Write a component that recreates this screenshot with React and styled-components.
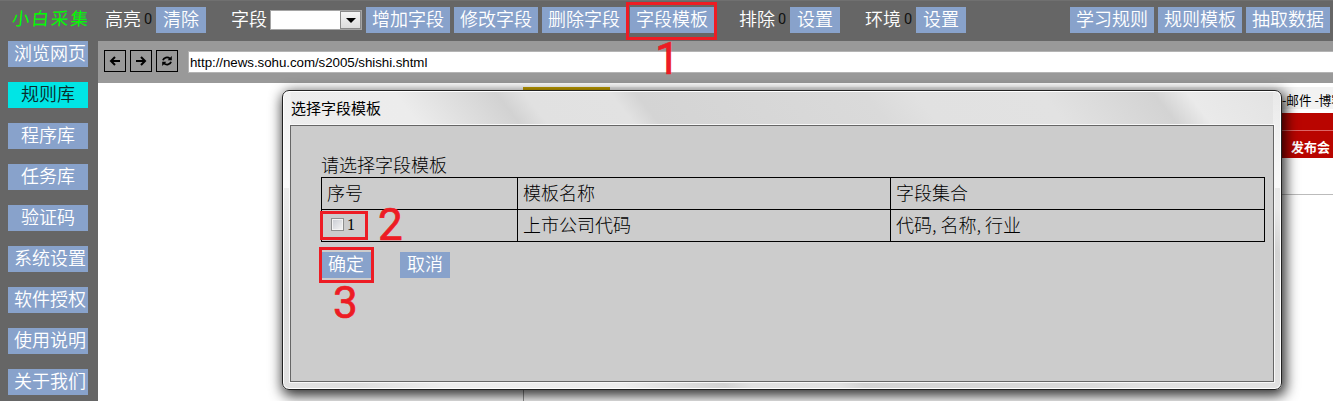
import React from 'react';
import styled, { createGlobalStyle, css } from 'styled-components';

const Global = createGlobalStyle`
  * { box-sizing: border-box; }
  body { margin: 0; overflow: hidden; background: #fff; }
`;

const cjk = '"Noto Sans CJK SC", sans-serif';

const Shell = styled.div`
  position: relative;
  width: 1333px;
  height: 401px;
  overflow: hidden;
  display: flex;
  flex-direction: column;
  font: 300 18px/26px ${cjk};
  color: #000;
`;
const TopBar = styled.header`
  flex: none;
  height: 41px;
  padding: 6px 3px 0 12px;
  background: #666;
  border-top: 1px solid #707070;
  display: flex;
  align-items: flex-start;
  white-space: nowrap;
`;
const Logo = styled.div`
  width: 93px;
  font-size: 17.5px;
  font-weight: 400;
  line-height: 22px;
  letter-spacing: 2px;
  color: #0f0;
  span { display: inline-block; transform: skewX(-5deg); }
`;
const Group = styled.div`
  display: flex;
  align-items: flex-start;
  margin-left: ${(p) => (p.$end ? 'auto' : `${p.$gap || 0}px`)};
`;
const Label = styled.span`
  color: #fff;
  font-weight: 350;
  line-height: 22px;
  width: 39px;
`;
const Count = styled.span`
  width: 12px;
  font: 14.5px/25px Roboto, sans-serif;
  color: #111;
`;
const Button = styled.button`
  flex: none;
  height: 26px;
  padding: 0 6px 4px;
  border: 0;
  background: #88a2cb;
  color: #fff;
  font: 350 18px/22px ${cjk};
  white-space: nowrap;
  text-align: center;
  ${(p) => p.$pad && css`width: 50px; padding: 0 7px 4px;`}
`;
const Buttons = styled.div`
  display: flex;
  gap: 4px;
`;
const Select = styled.div`
  width: 92px;
  height: 20px;
  margin: 3px 4px 0 0;
  display: flex;
  justify-content: flex-end;
  background: #fff;
  border: 1px solid #a5a5a5;
`;
const Arrow = styled.div`
  width: 21px;
  height: 18px;
  display: flex;
  align-items: center;
  justify-content: center;
  border: 1px solid #8a8a8a;
  background: linear-gradient(#f4f4f4, #dcdcdc);
`;
const Body = styled.div`
  flex: 1;
  display: flex;
  min-height: 0;
`;
const Sidebar = styled.nav`
  flex: none;
  width: 98px;
  padding: 0 10px 0 8px;
  background: #666;
  display: flex;
  flex-direction: column;
  gap: 15px;
`;
const NavItem = styled.div`
  flex: none;
  height: 26px;
  padding: 0 0 0 6px;
  padding-right: ${(p) => (p.$wide ? 0 : 6)}px;
  text-align: ${(p) => (p.$wide ? 'left' : 'center')};
  background: ${(p) => (p.$active ? '#00e5e5' : '#88a2cb')};
  color: ${(p) => (p.$active ? '#0a2c2c' : '#fff')};
  font-weight: 350;
  line-height: 23px;
  white-space: nowrap;
`;
const Main = styled.main`
  flex: 1;
  min-width: 0;
`;
const AddressBar = styled.div`
  height: 42px;
  padding: 9px 0 0 6px;
  display: flex;
  gap: 4px;
  background: #999;
`;
const NavButton = styled.div`
  width: 22px;
  height: 22px;
  display: flex;
  align-items: center;
  justify-content: center;
  border: 1px solid #000;
`;
const Url = styled.div`
  flex: 1;
  height: 22px;
  margin: 1px 0 0 6px;
  padding-left: 1px;
  background: #fff;
  border: 1px solid #b4b4b4;
  border-right: 0;
  font: 13.33px/21px "Liberation Sans", sans-serif;
  letter-spacing: -0.05px;
`;
const WebPage = styled.div`
  padding-top: 4px;
  display: flex;
  flex-direction: column;
`;
const SiteLinks = styled.div`
  height: 22px;
  margin-left: 425px;
  display: flex;
  justify-content: space-between;
  background: linear-gradient(#c8a400, #c8a400) 0 0 / 87px 22px no-repeat, #f2f2f2;
`;
const Links = styled.span`
  width: 51px;
  margin-left: auto;
  white-space: nowrap;
  font: 400 12.6px/25px ${cjk};
`;
const RedBar = styled.div`
  height: ${(p) => p.$h}px;
  margin-top: ${(p) => p.$top}px;
  padding-right: 3px;
  margin-left: 425px;
  background: #b90500;
  border-top: ${(p) => (p.$line ? '1px solid #d66' : '0')};
  color: #fff;
  font: 700 13px/31px ${cjk};
  text-align: right;
`;
const Column = styled.div`
  height: 210px;
  margin: 36px 0 0 425px;
  border-top: 1px solid #bbb;
  border-left: 1px solid #999;
`;
const Dialog = styled.section`
  position: absolute;
  left: 282px;
  top: 90px;
  width: 1000px;
  height: 300px;
  padding: 2px 7px 7px;
  border: 1px solid #222;
  border-radius: 7px;
  background:
    linear-gradient(rgba(255,255,255,.2), rgba(255,255,255,.75)) 0 0 / 8px 97px no-repeat,
    linear-gradient(rgba(255,255,255,.2), rgba(255,255,255,.75)) 100% 0 / 8px 97px no-repeat,
    linear-gradient(52deg, #e2e2e2 0, #dedede 60px, #ededed 130px, #ececec 270px, #d2d2d2 350px, #e1e1e1 372px, #e2e2e2 440px, #d4d4d4 460px, #dadada 640px, #e1e1e1 680px, #e2e2e2 780px, #d3d3d3 868px, #eaeaea 895px, #e2e2e2 973px);
  box-shadow: inset 0 0 0 1px #fff, 2px 4px 13px 2px rgba(0,0,0,.8);
`;
const Title = styled.h1`
  margin: 0;
  padding-left: 1px;
  height: 32px;
  font: 400 15px/30px ${cjk};
`;
const Panel = styled.div`
  height: 257px;
  padding: 28px 8px 0 30px;
  border: 1px solid #666;
  outline: 1px solid #f8f8f8;
  background: #ccc;
`;
const Prompt = styled.div`
  height: 23px;
  line-height: 21px;
`;
const Table = styled.table`
  width: 944px;
  border-collapse: collapse;
  table-layout: fixed;
`;
const Cell = styled.td`
  width: ${(p) => p.$w}px;
  height: 32px;
  padding: 0 5px 4px;
  border: 1px solid #000;
  line-height: 26px;
`;
const Choice = styled.label`
  display: flex;
  align-items: center;
  padding: 2px 0 0 4px;
  gap: 3px;
  font: 16px/25px "Liberation Serif", serif;
`;
const Box = styled.span`
  width: 13px;
  height: 13px;
  border: 1px solid #8e8f8f;
  background: linear-gradient(135deg, #c8cbd2, #f6f6f6);
  box-shadow: inset 0 0 0 1px #f4f4f4;
`;
const Actions = styled.div`
  display: flex;
  gap: 29px;
  margin-top: 10px;
`;
const Mark = styled.div`
  position: absolute;
  left: ${(p) => p.$x}px;
  top: ${(p) => p.$y}px;
  width: ${(p) => p.$w}px;
  height: ${(p) => p.$h}px;
  border: 3px solid #ed1c24;
`;
const Step = styled.div`
  position: absolute;
  left: ${(p) => p.$x}px;
  top: ${(p) => p.$y}px;
  color: #ed1c24;
  -webkit-text-stroke: 0.7px #ed1c24;
  font: 44px/45px Roboto, sans-serif;
`;

const Icon = ({ children }) => (
  <svg width="12" height="12" viewBox="0 0 12 12" fill="none" stroke="#000" strokeWidth="2">{children}</svg>
);

const nav = ['浏览网页', '规则库', '程序库', '任务库', '验证码', '系统设置', '软件授权', '使用说明', '关于我们'];

export default function App() {
  return (
    <Shell>
      <Global />
      <TopBar>
        <Logo><span>小白采集</span></Logo>
        <Group><Label>高亮</Label><Count>0</Count><Button $pad>清除</Button></Group>
        <Group $gap={25}>
          <Label>字段</Label>
          <Select><Arrow><svg width="10" height="5" viewBox="0 0 10 5"><path d="M0 0h10L5 5z" /></svg></Arrow></Select>
          <Buttons>
            {['增加字段', '修改字段', '删除字段', '字段模板'].map((t) => <Button key={t}>{t}</Button>)}
          </Buttons>
        </Group>
        <Group $gap={25}><Label>排除</Label><Count>0</Count><Button $pad>设置</Button></Group>
        <Group $gap={25}><Label>环境</Label><Count>0</Count><Button $pad>设置</Button></Group>
        <Group $end>
          <Buttons>
            {['学习规则', '规则模板', '抽取数据'].map((t) => <Button key={t}>{t}</Button>)}
          </Buttons>
        </Group>
      </TopBar>
      <Body>
        <Sidebar>
          {nav.map((t) => <NavItem key={t} $wide={t.length === 4} $active={t === '规则库'}>{t}</NavItem>)}
        </Sidebar>
        <Main>
          <AddressBar>
            <NavButton><Icon><path d="M11 6H2M6 2 2 6l4 4" /></Icon></NavButton>
            <NavButton><Icon><path d="M1 6h9M6 2l4 4-4 4" /></Icon></NavButton>
            <NavButton>
              <Icon>
                <path d="M2 5.2C2.6 2.4 6.6 1.4 9 3.6M10 6.8C9.4 9.6 5.4 10.6 3 8.4" strokeWidth="1.8" />
                <path d="M10.8 1v4.2H6.6zM1.2 11V6.8h4.2z" fill="#000" stroke="none" />
              </Icon>
            </NavButton>
            <Url>http://news.sohu.com/s2005/shishi.shtml</Url>
          </AddressBar>
          <WebPage>
            <SiteLinks><Links>-邮件 -博客</Links></SiteLinks>
            <RedBar $h={17} $top={4} />
            <RedBar $h={28} $top={0} $line>发布会</RedBar>
            <Column />
          </WebPage>
        </Main>
      </Body>
      <Dialog>
        <Title>选择字段模板</Title>
        <Panel>
          <Prompt>请选择字段模板</Prompt>
          <Table>
            <tbody>
              <tr><Cell $w={196}>序号</Cell><Cell $w={373}>模板名称</Cell><Cell $w={374}>字段集合</Cell></tr>
              <tr>
                <Cell><Choice><Box />1</Choice></Cell>
                <Cell>上市公司代码</Cell>
                <Cell>代码, 名称, 行业</Cell>
              </tr>
            </tbody>
          </Table>
          <Actions><Button $pad>确定</Button><Button $pad>取消</Button></Actions>
        </Panel>
      </Dialog>
      <Mark $x={626} $y={2} $w={91} $h={38} />
      <Mark $x={320} $y={211} $w={48} $h={29} />
      <Mark $x={319} $y={247} $w={55} $h={36} />
      <Step $x={655} $y={37}>1</Step>
      <Step $x={378} $y={203}>2</Step>
      <Step $x={333} $y={281}>3</Step>
    </Shell>
  );
}
